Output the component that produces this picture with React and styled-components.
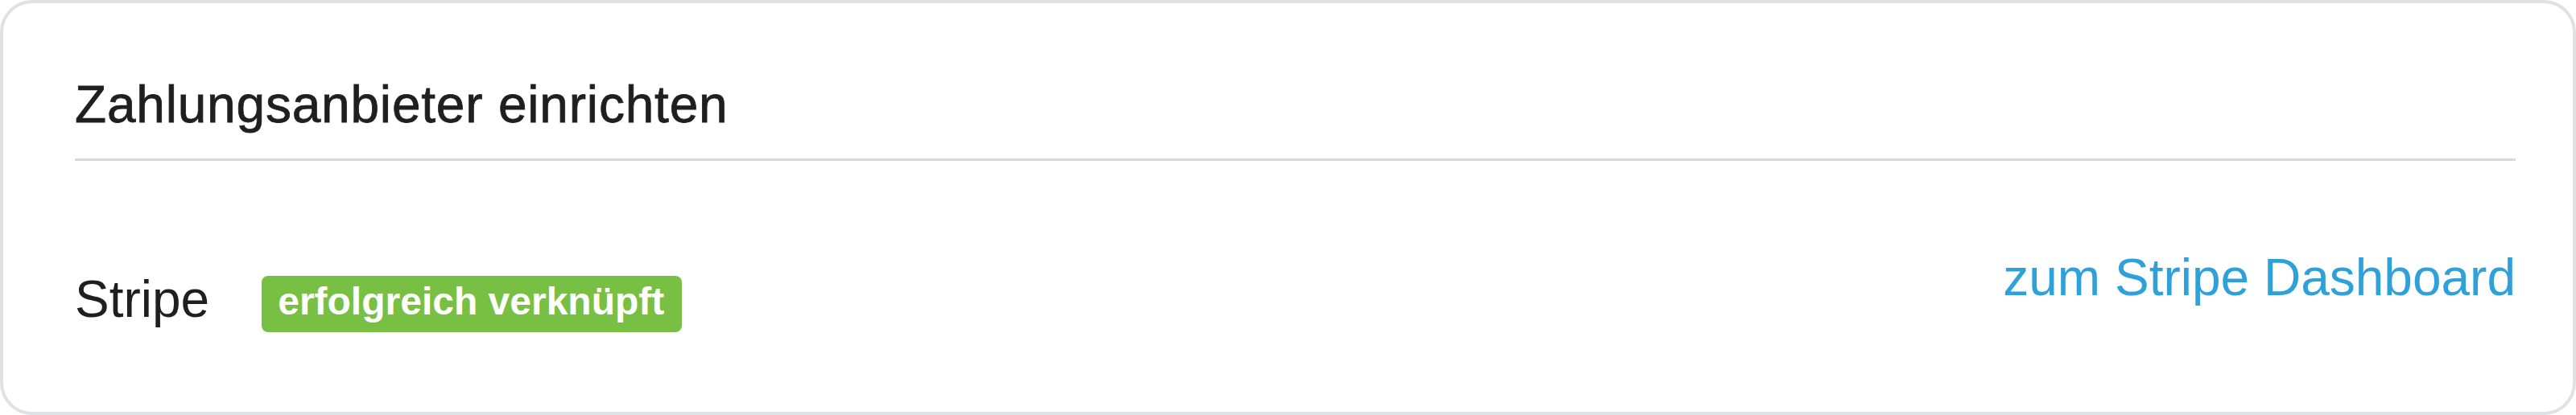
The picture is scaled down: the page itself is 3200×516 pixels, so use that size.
import React from 'react'
import styled, { createGlobalStyle } from 'styled-components'

const GlobalStyle = createGlobalStyle`
    html, body {
        margin: 0;
        padding: 0;
        background: #ffffff;
    }
    body {
        font-family: "Liberation Sans", Arial, sans-serif;
        color: #1f1f21;
    }
    * {
        box-sizing: border-box;
    }
`

const Card = styled.div`
    width: 100%;
    height: 516px;
    border: 4px solid #e0e1e3;
    border-radius: 40px;
    background: #ffffff;
    padding: 88px 71px 0 89px;
`

const Heading = styled.h2`
    margin: 0 0 29px;
    font-size: 64px;
    line-height: 76px;
    font-weight: 400;
    letter-spacing: 0.8px;
    -webkit-text-stroke: 0.8px #1f1f21;
    color: #1f1f21;
`

const Divider = styled.hr`
    margin: 0;
    border: none;
    height: 3px;
    background: #d8d9db;
`

const Row = styled.div`
    display: flex;
    justify-content: space-between;
    align-items: flex-start;
    padding-top: 107px;
`

const Provider = styled.div`
    display: flex;
    align-items: flex-start;
    gap: 65px;
    margin-top: 27px;
`

const Name = styled.span`
    font-size: 64px;
    line-height: 76px;
    color: #1f1f21;
`

const Badge = styled.span`
    display: inline-block;
    margin-top: 9px;
    height: 70px;
    padding: 0 22px 6px 20px;
    border-radius: 8px;
    background: ${(p) => p.$color || '#78c043'};
    color: #ffffff;
    font-size: 48px;
    line-height: 64px;
    font-weight: 700;
`

const DashboardLink = styled.a`
    font-size: 64px;
    line-height: 76px;
    color: #2fa1da;
    text-decoration: none;
`

const App = () => {
    return (
        <>
            <GlobalStyle />
            <Card>
                <Heading>Zahlungsanbieter einrichten</Heading>
                <Divider />
                <Row>
                    <Provider>
                        <Name>Stripe</Name>
                        <Badge>erfolgreich verknüpft</Badge>
                    </Provider>
                    <DashboardLink href="#">zum Stripe Dashboard</DashboardLink>
                </Row>
            </Card>
        </>
    )
}

export default App
